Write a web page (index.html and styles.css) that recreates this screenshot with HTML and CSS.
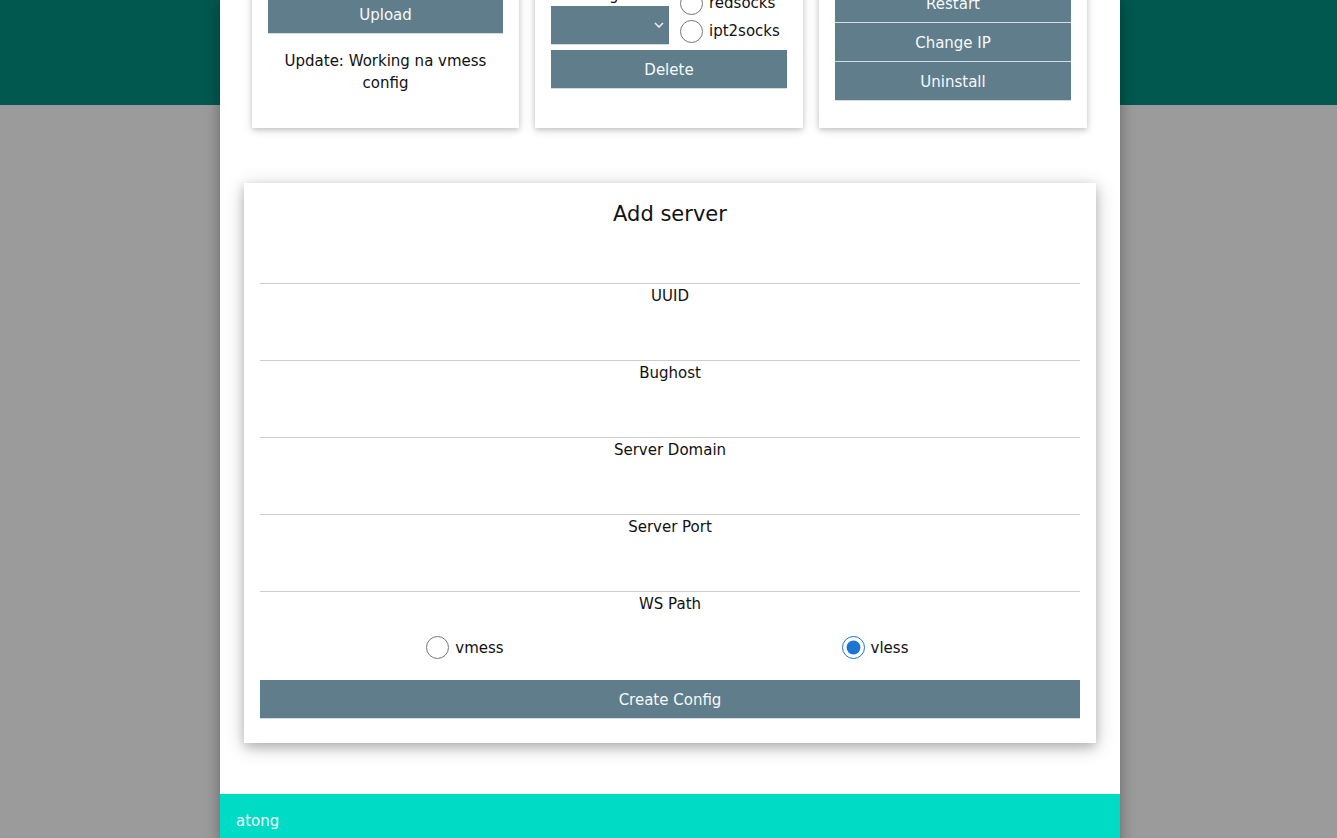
FILE: index.html
```html
<!DOCTYPE html>
<html>
<head>
    <title>Panel</title>
    <link rel="stylesheet" href="styles.css">
</head>
<body>
    <div class="page">
        <div class="panels">
            <div class="panel">
                <h3>Config</h3>
                <button class="btn">Upload</button>
                <p class="note">Update: Working na vmess config</p>
            </div>
            <div class="panel">
                <h3>Mode</h3>
                <div class="mode-row">
                    <div class="config-list">
                        <label>Config List</label>
                        <div class="select-wrap">
                            <select class="select"></select>
                            <svg class="chevron" width="10" height="6" viewBox="0 0 10 6">
                                <path d="M1 1l4 4 4-4" fill="none" stroke="#e8eef1" stroke-width="1.6"/>
                            </svg>
                        </div>
                    </div>
                    <div class="modes">
                        <label class="radio"><input type="radio" name="mode"> tun2socks</label>
                        <label class="radio"><input type="radio" name="mode"> redsocks</label>
                        <label class="radio"><input type="radio" name="mode"> ipt2socks</label>
                    </div>
                </div>
                <button class="btn delete">Delete</button>
            </div>
            <div class="panel">
                <h3>Service</h3>
                <button class="btn">Start</button>
                <button class="btn">Stop</button>
                <button class="btn">Restart</button>
                <button class="btn">Change IP</button>
                <button class="btn">Uninstall</button>
            </div>
        </div>

        <div class="add-server">
            <h3>Add server</h3>
            <div class="field">
                <input type="text">
                <label>UUID</label>
            </div>
            <div class="field">
                <input type="text">
                <label>Bughost</label>
            </div>
            <div class="field">
                <input type="text">
                <label>Server Domain</label>
            </div>
            <div class="field">
                <input type="text">
                <label>Server Port</label>
            </div>
            <div class="field">
                <input type="text">
                <label>WS Path</label>
            </div>
            <div class="protocols">
                <label class="radio"><input type="radio" name="proto"> vmess</label>
                <label class="radio"><input type="radio" name="proto" checked> vless</label>
            </div>
            <button class="btn create">Create Config</button>
        </div>

        <footer class="footer">atong</footer>
    </div>
</body>
</html>
```

FILE: styles.css
```css
body {
    margin: 0;
    padding-left: 3px;
    font-family: "DejaVu Sans", Verdana, sans-serif;
    font-size: 15px;
    color: #111;
    background: linear-gradient(#00584f 0, #00584f 105px, #9b9b9b 105px);
    min-height: 100vh;
}

.page {
    width: 900px;
    margin: 0 auto;
    background: #fff;
    box-shadow: 0 0 14px rgba(0, 0, 0, 0.35);
    display: flow-root;
}

.panels {
    display: grid;
    grid-template-columns: 267px 268px 268px;
    gap: 16px;
    padding: 0 32px;
    margin-top: -150px;
}

.panel {
    display: flex;
    flex-direction: column;
    justify-content: flex-end;
    min-width: 0;
    background: #fff;
    padding: 16px 16px 27px;
    box-shadow: 0 2px 5px rgba(0, 0, 0, 0.16), 0 2px 10px rgba(0, 0, 0, 0.12);
}

.panel h3 {
    margin: 0 0 10px;
    font-size: 18px;
    font-weight: normal;
    line-height: 30px;
    text-align: center;
}

.btn {
    display: block;
    width: 100%;
    height: 39px;
    border: 0;
    border-bottom: 1px solid #d3dce0;
    background: #607d8b;
    color: #f7f9fa;
    font-family: inherit;
    font-size: 15px;
    padding: 2px 0 0;
}

.note {
    margin: 16px 0 7px;
    line-height: 22px;
    text-align: center;
}

.mode-row {
    display: flex;
    align-items: flex-end;
    gap: 11px;
}

.config-list {
    flex: 0 0 118px;
    text-align: center;
}

.config-list label {
    display: block;
    line-height: 22px;
}

.select-wrap {
    position: relative;
}

.select {
    display: block;
    width: 100%;
    height: 39px;
    border: 0;
    border-bottom: 1px solid #d3dce0;
    background: #607d8b;
    appearance: none;
}

.chevron {
    position: absolute;
    right: 5px;
    top: 16px;
}

.modes {
    display: flex;
    flex-direction: column;
}

.radio {
    display: flex;
    align-items: center;
    gap: 6px;
    height: 28px;
}

.radio input {
    width: 23px;
    height: 23px;
    margin: 0;
    accent-color: #1b76d2;
}

.delete {
    margin: 5px 0 12px;
}

.add-server {
    margin: 55px 24px 0;
    padding: 16px 16px 24px;
    box-shadow: 0 4px 10px rgba(0, 0, 0, 0.2), 0 4px 20px rgba(0, 0, 0, 0.19);
}

.add-server h3 {
    margin: 0 0 16px;
    font-size: 21px;
    font-weight: normal;
    line-height: 30px;
    text-align: center;
}

.field input {
    display: block;
    width: 100%;
    height: 39px;
    box-sizing: border-box;
    border: 0;
    border-bottom: 1px solid #ccc;
    padding: 8px;
    font-family: inherit;
    font-size: 15px;
}

.field label {
    display: block;
    padding-top: 1px;
    line-height: 22px;
    margin-bottom: 15px;
    text-align: center;
}

.protocols {
    display: grid;
    grid-template-columns: 1fr 1fr;
    justify-items: center;
    height: 35px;
    align-items: center;
    margin-top: 3px;
}

.create {
    margin-top: 15px;
}

.footer {
    margin-top: 51px;
    background: #00dbc5;
    color: #f2fffd;
    padding: 16px 16px 15px;
    line-height: 22px;
}
```
